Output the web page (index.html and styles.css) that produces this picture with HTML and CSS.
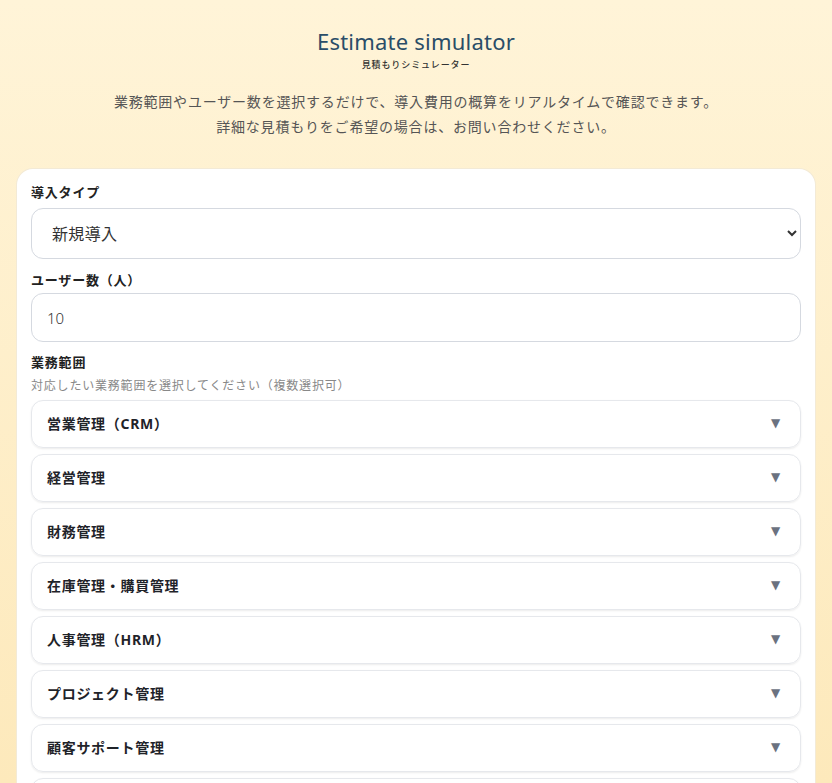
FILE: index.html
```html
<!DOCTYPE html>
<html lang="ja">
<head>
<meta charset="utf-8">
<title>Estimate simulator</title>
<link rel="stylesheet" href="styles.css">
</head>
<body>
<header class="header">
  <h1 class="title">Estimate simulator</h1>
  <p class="sub">見積もりシミュレーター</p>
  <p class="desc">業務範囲やユーザー数を選択するだけで、導入費用の概算をリアルタイムで確認できます。<br>詳細な見積もりをご希望の場合は、お問い合わせください。</p>
</header>
<main class="card">
  <label class="label" for="type">導入タイプ</label>
  <select id="type" class="field select">
    <option>新規導入</option>
    <option>リプレイス</option>
  </select>
  <label class="label" for="users">ユーザー数（人）</label>
  <input id="users" class="field input" type="number" value="10">
  <div class="label">業務範囲</div>
  <div class="hint">対応したい業務範囲を選択してください（複数選択可）</div>
  <div class="list">
    <div class="item"><span class="item-name">営業管理（CRM）</span><span class="tri">▼</span></div>
    <div class="item"><span class="item-name">経営管理</span><span class="tri">▼</span></div>
    <div class="item"><span class="item-name">財務管理</span><span class="tri">▼</span></div>
    <div class="item"><span class="item-name">在庫管理・購買管理</span><span class="tri">▼</span></div>
    <div class="item"><span class="item-name">人事管理（HRM）</span><span class="tri">▼</span></div>
    <div class="item"><span class="item-name">プロジェクト管理</span><span class="tri">▼</span></div>
    <div class="item"><span class="item-name">顧客サポート管理</span><span class="tri">▼</span></div>
    <div class="item"><span class="item-name">その他</span><span class="tri">▼</span></div>
  </div>
</main>
</body>
</html>
```
FILE: styles.css
```css
html, body {
  margin: 0;
  padding: 0;
}
body {
  font-family: "Noto Sans", "Noto Sans CJK JP", sans-serif;
  background: linear-gradient(180deg, #fff4d8 0%, #fde9bb 100%) fixed;
  color: #222;
  letter-spacing: 0.05em;
  min-height: 783px;
}
.header {
  text-align: center;
  padding: 26px 16px 0;
}
.title {
  margin: 0;
  font-size: 22px;
  line-height: 30px;
  font-weight: 400;
  color: #2a4d68;
  letter-spacing: 0.01em;
}
.sub {
  margin: 2px 0 0;
  font-size: 9px;
  line-height: 14px;
  color: #333;
  letter-spacing: 0.1em;
  font-weight: 500;
}
.desc {
  margin: 17px 0 0;
  font-size: 14px;
  line-height: 25px;
  color: #555;
}
.card {
  margin: 30px 17px 0;
  background: #fff;
  border-radius: 16px;
  padding: 14px 14px 20px;
  display: flex;
  flex-direction: column;
  box-shadow: 0 0 0 1px #f3ead6;
}
.label {
  font-size: 13px;
  line-height: 18px;
  font-weight: 700;
  color: #222;
}
.field {
  box-sizing: border-box;
  width: 100%;
  border: 1px solid #d5d9e0;
  border-radius: 12px;
  background: #fff;
  font-family: inherit;
  color: #333;
  letter-spacing: 0.02em;
}
.select {
  height: 51px;
  margin: 7px 0 12px;
  padding: 0 12px 0 16px;
  font-size: 16px;
}
.input {
  height: 49px;
  margin: 4px 0 11px;
  padding: 0 15px;
  font-size: 15px;
  font-weight: 300;
  letter-spacing: 0;
}
.hint {
  margin-top: 6px;
  font-size: 12px;
  line-height: 18px;
  color: #888;
}
.list {
  margin-top: 5px;
  display: flex;
  flex-direction: column;
  gap: 6px;
}
.item {
  box-sizing: border-box;
  height: 48px;
  border: 1px solid #e6e8ec;
  border-radius: 12px;
  box-shadow: 0 1px 2px rgba(0, 0, 0, 0.08);
  display: flex;
  align-items: center;
  justify-content: space-between;
  padding: 0 19px 3px 15px;
}
.item-name {
  font-size: 14px;
  font-weight: 700;
  color: #1f2329;
  letter-spacing: 0.05em;
}
.tri {
  font-size: 12px;
  color: #6b7280;
  font-family: "DejaVu Sans", sans-serif;
}
```
